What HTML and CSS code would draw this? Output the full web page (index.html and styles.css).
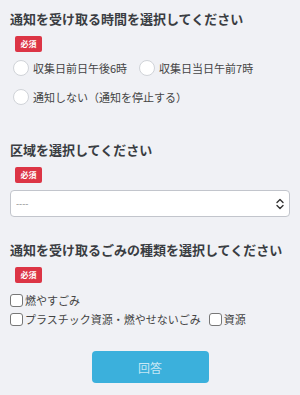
FILE: index.html
```html
<!DOCTYPE html>
<html lang="ja">
<head>
    <meta charset="UTF-8">
    <meta name="viewport" content="width=device-width, initial-scale=1.0">
    <title>通知設定</title>
    <link rel="stylesheet" href="styles.css">
</head>
<body>

    <form class="form">
        <div class="section">
            <h2 class="section-title">通知を受け取る時間を選択してください</h2>
            <span class="badge">必須</span>
            <div class="radio-list">
                <label class="radio"><input type="radio" name="time"><span>収集日前日午後6時</span></label>
                <label class="radio"><input type="radio" name="time"><span>収集日当日午前7時</span></label>
                <label class="radio"><input type="radio" name="time"><span>通知しない（通知を停止する）</span></label>
            </div>
        </div>

        <div class="section area">
            <h2 class="section-title">区域を選択してください</h2>
            <span class="badge">必須</span>
            <div class="select-wrap">
                <select class="select">
                    <option>----</option>
                </select>
                <svg class="select-arrow" width="10" height="12" viewBox="0 0 10 12">
                    <path d="M2 4.5 L5 1.5 L8 4.5 M2 7.5 L5 10.5 L8 7.5" fill="none" stroke="#333" stroke-width="1.4" stroke-linecap="round" stroke-linejoin="round"/>
                </svg>
            </div>
        </div>

        <div class="section garbage">
            <h2 class="section-title">通知を受け取るごみの種類を選択してください</h2>
            <span class="badge">必須</span>
            <div class="check-list">
                <label class="check"><input type="checkbox"><span>燃やすごみ</span></label>
                <label class="check"><input type="checkbox"><span>プラスチック資源・燃やせないごみ</span></label>
                <label class="check"><input type="checkbox"><span>資源</span></label>
            </div>
        </div>

        <div class="actions">
            <button type="button" class="submit">回答</button>
        </div>
    </form>

</body>
</html>
```

FILE: styles.css
```css
body {
    margin: 0;
    background-color: #f0f1f5;
    font-family: "Noto Sans CJK JP", "Noto Sans", sans-serif;
    color: #333;
}

.form {
    padding: 10px 10px 0 10px;
}

.section-title {
    margin: 0;
    font-size: 13px;
    font-weight: bold;
    line-height: 18px;
    color: #3a3d42;
}

.badge {
    display: inline-block;
    margin: 8px 0 0 5px;
    width: 27px;
    height: 16px;
    line-height: 16px;
    text-align: center;
    background-color: #dc3545;
    color: #fff;
    font-size: 8px;
    font-weight: bold;
    border-radius: 2px;
}

.radio-list {
    display: flex;
    flex-wrap: wrap;
    column-gap: 12px;
    row-gap: 13px;
    margin-top: 8px;
    padding-left: 3px;
}

.radio, .check {
    display: flex;
    align-items: center;
    font-size: 11px;
    color: #444;
}

.radio input {
    appearance: none;
    margin: 0 4px 0 0;
    width: 16px;
    height: 16px;
    border: 1px solid #d0d3d8;
    border-radius: 50%;
    background-color: #fff;
}

.area {
    margin-top: 36px;
}

.select-wrap {
    position: relative;
    margin-top: 7px;
}

.select {
    appearance: none;
    display: block;
    width: 100%;
    height: 27px;
    padding: 0 5px;
    border: 1px solid #c2c5cc;
    border-radius: 4px;
    background-color: #fff;
    font-family: inherit;
    font-size: 9px;
    color: #888;
}

.select-arrow {
    position: absolute;
    right: 5px;
    top: 8px;
}

.garbage {
    margin-top: 24px;
}

.check-list {
    display: flex;
    flex-wrap: wrap;
    column-gap: 8px;
    row-gap: 3px;
    margin-top: 9px;
}

.check:first-child {
    flex-basis: 100%;
}

.check input {
    appearance: none;
    margin: 0 2px 0 0;
    width: 13px;
    height: 13px;
    border: 1px solid #777;
    border-radius: 3px;
    background-color: #fff;
}

.actions {
    display: flex;
    justify-content: center;
    margin-top: 24px;
}

.submit {
    width: 117px;
    height: 32px;
    border: none;
    border-radius: 4px;
    background-color: #3bb0dc;
    color: rgba(255, 255, 255, 0.72);
    font-family: inherit;
    font-size: 12px;
}
```
